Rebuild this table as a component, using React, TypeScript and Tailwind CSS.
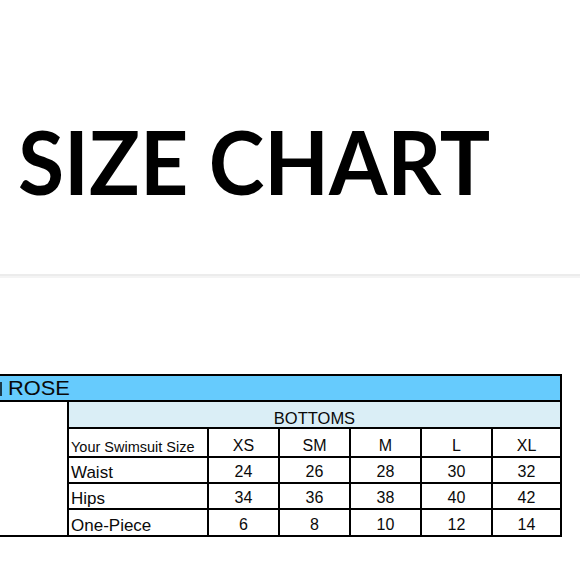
import React from "react";

const sizes = ["XS", "SM", "M", "L", "XL"];
const rows: { label: string; values: string[] }[] = [
  { label: "Waist", values: ["24", "26", "28", "30", "32"] },
  { label: "Hips", values: ["34", "36", "38", "40", "42"] },
  { label: "One-Piece", values: ["6", "8", "10", "12", "14"] },
];

export default function App() {
  return (
    <div className="w-[580px] h-[579px] bg-white overflow-hidden flex flex-col">
      <div className="h-[274px] flex flex-col">
        <h1
          className="mt-[117px] pl-[18px] text-[88px] leading-[88px] font-bold text-black whitespace-nowrap"
          style={{ fontFamily: "Lato, 'Open Sans', sans-serif" }}
        >
          <span className="inline-block origin-left scale-x-[0.955]">SIZE CHART</span>
        </h1>
      </div>
      <div className="h-[2px] bg-[#ececec]" />
      <div className="h-[2px] bg-[#f4f4f4]" />
      <div className="h-[96px]" />
      <div
        className="w-[562px] bg-black pt-[2px] pr-[2px] pb-[2px] flex flex-col gap-[2px] text-[#0a0a0a]"
        style={{ fontFamily: "'Liberation Sans', Arial, sans-serif" }}
      >
        <div className="h-[24px] bg-[#66cbfd] overflow-hidden flex items-center">
          <span className="w-[2px] h-[14px] bg-[#1a3a4a] mt-[2px]" />
          <span className="ml-[6px] inline-block origin-left scale-x-[1.12] text-[19.5px] leading-none whitespace-nowrap mt-[2px]">
            ROSE
          </span>
        </div>
        <div className="flex gap-[2px]">
          <div className="w-[67px] bg-white" />
          <div className="flex-1 flex flex-col gap-[2px]">
            <div className="h-[25px] bg-[#daeef6] flex items-end justify-center">
              <span className="text-[16.5px] leading-none pb-[1px]">BOTTOMS</span>
            </div>
            <div className="grid grid-cols-[138px_69px_69px_69px_69px_67px] grid-rows-[27px_24px_24px_25px] gap-[2px]">
              <div className="bg-white flex items-end pl-[2px] pb-[2px]">
                <span className="text-[14.5px] leading-none whitespace-nowrap">Your Swimsuit Size</span>
              </div>
              {sizes.map((s) => (
                <div key={s} className="bg-white flex items-end justify-center pb-[2px]">
                  <span className="text-[16px] leading-none">{s}</span>
                </div>
              ))}
              {rows.map((r) => (
                <React.Fragment key={r.label}>
                  <div className="bg-white flex items-end pl-[2px] pb-[1px]">
                    <span className="text-[17px] leading-none whitespace-nowrap">{r.label}</span>
                  </div>
                  {r.values.map((v, i) => (
                    <div key={i} className="bg-white flex items-end justify-center pb-[2px]">
                      <span className="text-[16px] leading-none">{v}</span>
                    </div>
                  ))}
                </React.Fragment>
              ))}
            </div>
          </div>
        </div>
      </div>
    </div>
  );
}
